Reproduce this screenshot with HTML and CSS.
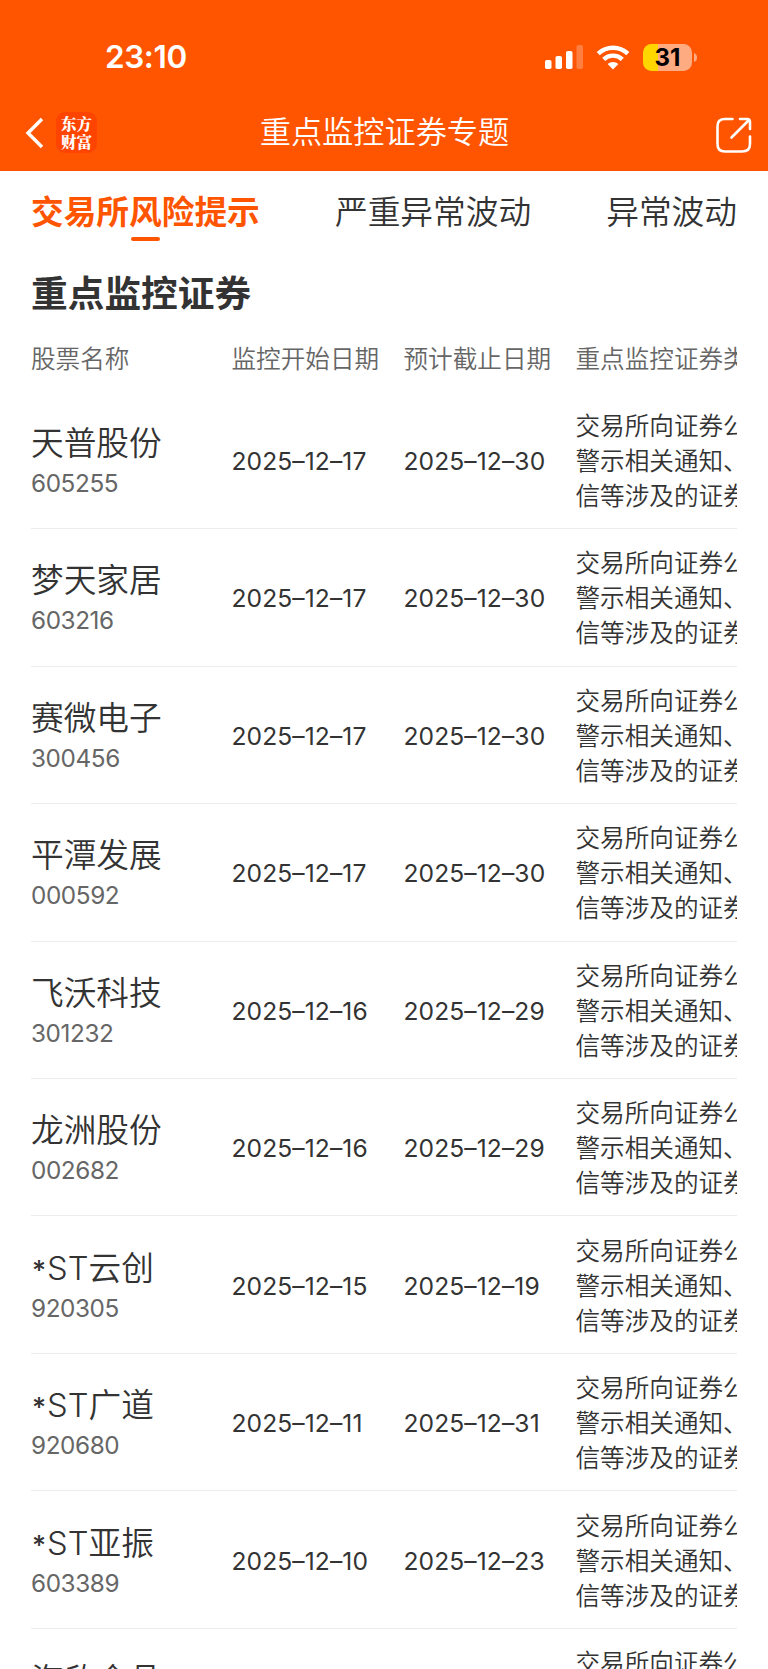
FILE: index.html
```html
<!DOCTYPE html>
<html lang="zh-CN">
<head>
<meta charset="utf-8">
<title>重点监控证券专题</title>
<link rel="stylesheet" href="styles.css">
</head>
<body>
<header class="top">
  <div class="status">
    <span class="clock">23:10</span>
    <div class="indicators">
      <svg class="signal" width="38" height="24" viewBox="0 0 38 24" fill="#fff"><rect x="0" y="15" width="6.5" height="9" rx="1.8"/><rect x="10.5" y="11" width="6.5" height="13" rx="1.8"/><rect x="21" y="6" width="6.5" height="18" rx="1.8"/><rect x="31.5" y="0" width="6.5" height="24" rx="1.8" opacity=".25"/></svg>
      <svg class="wifi" width="34" height="25" viewBox="0 0 34 25"><path d="M2.2 8.7A21.5 21.5 0 0 1 31.8 8.7M7.7 14.3A13.5 13.5 0 0 1 26.3 14.3" fill="none" stroke="#fff" stroke-width="4.4"/><path d="M17 24.5L11.6 19.1A8 8 0 0 1 22.4 19.1Z" fill="#fff"/></svg>
      <div class="battery"><span class="level">31</span></div>
      <svg class="cap" width="3" height="9" viewBox="0 0 3 9"><path d="M0 0Q3 1 3 4.5T0 9Z" fill="#ffab82"/></svg>
    </div>
  </div>
  <nav class="nav">
    <div class="side">
      <svg class="back" width="20" height="32" viewBox="0 0 20 32"><path d="M17 2L3 16L17 30" fill="none" stroke="#fff" stroke-width="3.4"/></svg>
      <div class="logo"><span>东方</span><span>财富</span></div>
    </div>
    <h1 class="nav-title">重点监控证券专题</h1>
    <div class="side side-end">
      <svg class="share" width="36" height="36" viewBox="0 0 36 36" fill="none" stroke="#fff" stroke-width="2.6" stroke-linecap="round" stroke-linejoin="round"><path d="M16.5 2H9Q1.500 2 1.500 9V27Q1.500 34.500 9 34.500H26Q34 34.500 34 27V19.500M24 2H31Q34 2 34 5V12M33 3L15.500 20.500"/></svg>
    </div>
  </nav>
</header>
<div class="tabs">
  <span class="tab active">交易所风险提示</span>
  <span class="tab">严重异常波动</span>
  <span class="tab">异常波动</span>
</div>
<main class="content">
  <h2 class="title">重点监控证券</h2>
  <div class="row head"><span>股票名称</span><span>监控开始日期</span><span>预计截止日期</span><span>重点监控证券类型</span></div>
  <div id="rows"></div>
</main>
<script src="rows.js"></script>
</body>
</html>
```
FILE: styles.css
```css
* { box-sizing: border-box; }
html { height: 1669px; overflow: hidden; }
body {
  margin: 0;
  height: 1669px;
  overflow: hidden;
  background: #fff;
  color: #333;
  font-family: Inter, "Noto Sans CJK SC", sans-serif;
  font-weight: 350;
}
.top { height: 171px; background: #ff5500; color: #fff; }
.status {
  height: 92px;
  padding: 22px 71px 0 105px;
  display: flex;
  justify-content: space-between;
  align-items: center;
}
.clock { font-size: 31.5px; font-weight: 600; line-height: 40px; letter-spacing: -0.4px; }
.indicators { display: flex; align-items: center; }
.wifi { margin-left: 13px; }
.battery {
  width: 49px;
  height: 27px;
  margin-left: 13px;
  border-radius: 8.500px;
  background: linear-gradient(to right, #ffd600 15px, #ffab82 15px);
  display: flex;
  align-items: center;
  justify-content: center;
}
.level { color: #000; font-size: 24px; font-weight: 700; line-height: 27px; }
.cap { margin-left: 2px; }
.nav {
  height: 79px;
  padding: 0 16px 0 25px;
  display: grid;
  grid-template-columns: 120px 1fr 128px;
  align-items: center;
}
.side { display: flex; align-items: center; padding-top: 2px; }
.side-end { justify-content: flex-end; padding-top: 6px; }
.logo {
  width: 41px;
  height: 41px;
  margin-left: 11px;
  border-radius: 9px;
  background: #ff4400;
  display: flex;
  flex-direction: column;
  align-items: center;
  justify-content: center;
  font-family: "Noto Serif CJK SC", "Noto Sans CJK SC", serif;
  font-size: 15.500px;
  font-weight: 900;
  line-height: 17.500px;
}
.nav-title {
  margin: 0;
  padding-top: 1px;
  text-align: center;
  font-size: 31.2px;
  font-weight: 350;
  line-height: 46px;
  white-space: nowrap;
}
.tabs {
  height: 84px;
  padding: 1px 31px 0;
  display: flex;
  justify-content: space-between;
  font-size: 32.7px;
  line-height: 80px;
  font-weight: 350;
}
.tab { white-space: nowrap; }
.active { position: relative; color: #ff5500; font-weight: 700; }
.active::after {
  content: "";
  position: absolute;
  left: 50%;
  top: 65px;
  width: 29px;
  height: 4px;
  margin-left: -14.500px;
  border-radius: 2px;
  background: #ff5500;
}
.content { margin: 0 31px; }
.title { margin: 0; font-size: 36.7px; font-weight: 700; line-height: 77px; }
.row {
  height: 137.460px;
  display: grid;
  grid-template-columns: 200.500px 172px 172px 1fr;
  align-items: center;
  overflow: hidden;
  border-bottom: 1.500px solid #ececec;
  font-size: 24.6px;
  white-space: nowrap;
}
.head { height: 59.700px; border: 0; color: #666; line-height: 54px; align-items: start; }
.stock { display: flex; flex-direction: column; padding-top: 2px; }
.name { font-size: 32.7px; line-height: 44px; }
.code { color: #666; line-height: 36px; font-size: 24.3px; letter-spacing: -0.4px; font-weight: 400; }
.date { padding-top: 2px; letter-spacing: 0.1px; font-weight: 400; }
.type { line-height: 35px; padding-top: 3px; }
.star { font-size: 27px; margin: 0 1px; font-weight: 500; line-height: 1; }
```
FILE: rows.js
```js
const stocks = [
  ["天普股份", "605255", "2025–12–17", "2025–12–30"],
  ["梦天家居", "603216", "2025–12–17", "2025–12–30"],
  ["赛微电子", "300456", "2025–12–17", "2025–12–30"],
  ["平潭发展", "000592", "2025–12–17", "2025–12–30"],
  ["飞沃科技", "301232", "2025–12–16", "2025–12–29"],
  ["龙洲股份", "002682", "2025–12–16", "2025–12–29"],
  ["*ST云创", "920305", "2025–12–15", "2025–12–19"],
  ["*ST广道", "920680", "2025–12–11", "2025–12–31"],
  ["*ST亚振", "603389", "2025–12–10", "2025–12–23"],
  ["海欣食品", "", "", ""]
];
const type = "交易所向证券公<br>警示相关通知、<br>信等涉及的证券";
document.getElementById("rows").innerHTML = stocks.map(([name, code, start, end]) =>
  `<div class="row"><div class="stock"><span class="name">${name.replace("*", '<span class="star">*</span>')}</span><span class="code">${code || "&nbsp;"}</span></div><span class="date">${start}</span><span class="date">${end}</span><span class="type">${type}</span></div>`
).join("");
```
